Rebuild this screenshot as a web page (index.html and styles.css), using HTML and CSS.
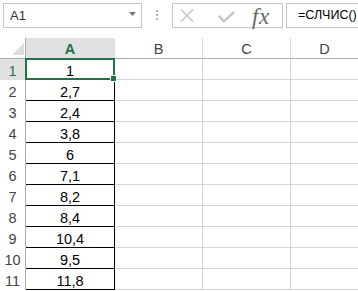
FILE: index.html
```html
<!DOCTYPE html>
<html lang="ru">
<head>
<meta charset="utf-8">
<title>Excel</title>
<link rel="stylesheet" href="styles.css">
</head>
<body>
<div class="app">
  <div class="fbar">
    <div class="namebox">
      <span class="nb-text">A1</span>
      <svg class="nb-arrow" width="7" height="4" viewBox="0 0 7 4"><polygon points="0,0 7,0 3.5,4" fill="#777"/></svg>
    </div>
    <div class="grip"><i></i><i></i><i></i></div>
    <div class="fxbox">
      <svg class="ic-x" width="14" height="13" viewBox="0 0 14 13"><path d="M1 0.5 L13 12.5 M13 0.5 L1 12.5" stroke="#c4c4c4" stroke-width="1.4" fill="none"/></svg>
      <svg class="ic-check" width="17" height="12" viewBox="0 0 17 12"><polyline points="0.8,4.8 6,10.3 16.3,0.8" stroke="#c4c4c4" stroke-width="2.3" fill="none"/></svg>
      <span class="fx">fx</span>
    </div>
    <div class="formula">=СЛЧИС()</div>
  </div>

  <div class="sheet">
    <div class="c corner"><svg width="12" height="12" viewBox="0 0 12 12"><polygon points="12,0 12,12 0,12" fill="#dcdcdc"/></svg></div>
    <div class="c colhdr sel">A</div>
    <div class="c colhdr">B</div>
    <div class="c colhdr">C</div>
    <div class="c colhdr last">D</div>

    <div class="c rowhdr sel">1</div>
    <div class="c val active">1</div>
    <div class="c g"></div><div class="c g"></div><div class="c g last"></div>

    <div class="c rowhdr">2</div><div class="c val">2,7</div>
    <div class="c g"></div><div class="c g"></div><div class="c g last"></div>

    <div class="c rowhdr">3</div><div class="c val">2,4</div>
    <div class="c g"></div><div class="c g"></div><div class="c g last"></div>

    <div class="c rowhdr">4</div><div class="c val">3,8</div>
    <div class="c g"></div><div class="c g"></div><div class="c g last"></div>

    <div class="c rowhdr">5</div><div class="c val">6</div>
    <div class="c g"></div><div class="c g"></div><div class="c g last"></div>

    <div class="c rowhdr">6</div><div class="c val">7,1</div>
    <div class="c g"></div><div class="c g"></div><div class="c g last"></div>

    <div class="c rowhdr">7</div><div class="c val">8,2</div>
    <div class="c g"></div><div class="c g"></div><div class="c g last"></div>

    <div class="c rowhdr">8</div><div class="c val">8,4</div>
    <div class="c g"></div><div class="c g"></div><div class="c g last"></div>

    <div class="c rowhdr">9</div><div class="c val">10,4</div>
    <div class="c g"></div><div class="c g"></div><div class="c g last"></div>

    <div class="c rowhdr">10</div><div class="c val">9,5</div>
    <div class="c g"></div><div class="c g"></div><div class="c g last"></div>

    <div class="c rowhdr">11</div><div class="c val">11,8</div>
    <div class="c g"></div><div class="c g"></div><div class="c g last"></div>
  </div>
</div>
</body>
</html>
```

FILE: styles.css
```css
* { box-sizing: border-box; }
html, body { margin: 0; padding: 0; background: #fff; }
body { width: 358px; height: 291px; overflow: hidden; font-family: "Liberation Sans", Arial, sans-serif; }

.fbar {
  height: 38px;
  padding-top: 3px;
  display: flex;
  align-items: flex-start;
  white-space: nowrap;
}
.namebox {
  margin-left: 3px;
  width: 139px;
  height: 25px;
  border: 1px solid #c6c6c6;
  display: flex;
  align-items: flex-start;
  justify-content: space-between;
  padding: 0 5px 0 6px;
}
.nb-text { font-size: 13px; line-height: 23px; color: #333; }
.nb-arrow { margin-top: 8px; display: block; }

.grip {
  width: 30px;
  padding-left: 14px;
  padding-top: 7px;
  display: flex;
  flex-direction: column;
  gap: 2px;
}
.grip i { display: block; width: 2px; height: 2px; background: #b0b0b0; }

.fxbox {
  width: 111px;
  height: 25px;
  border: 1px solid #c6c6c6;
  display: flex;
  align-items: flex-start;
}
.ic-x { display: block; margin-left: 7px; margin-top: 5px; }
.ic-check { display: block; margin-left: 24px; margin-top: 7px; }
.fx {
  margin-left: 17px;
  font-family: "Liberation Serif", "Times New Roman", serif;
  font-style: italic;
  font-size: 23px;
  line-height: 23px;
  margin-top: 1px;
  color: #666;
  letter-spacing: 0.5px;
}
.formula {
  margin-left: 3px;
  flex: 1;
  height: 25px;
  border: 1px solid #c6c6c6;
  border-right: none;
  padding-left: 11px;
  font-size: 12.5px;
  line-height: 23px;
  color: #000;
}

.sheet {
  display: grid;
  grid-template-columns: 26px 89px 88px 88px 1fr;
  grid-auto-rows: 21px;
}
.c {
  border-right: 1px solid #d4d4d4;
  border-bottom: 1px solid #d4d4d4;
  font-size: 14.5px;
  line-height: 16px;
  padding-top: 4px;
  text-align: center;
  color: #000;
}
.c.last { border-right: none; }

.corner {
  border-right: 1px solid #ababab;
  border-bottom: 1px solid #ababab;
  display: flex;
  justify-content: flex-end;
  align-items: flex-end;
  padding: 0 1px 3px 0;
}
.corner svg { display: block; }

.colhdr {
  border-right: 1px solid #dadada;
  border-bottom: 1px solid #ababab;
  color: #444;
  padding-top: 3px;
}
.colhdr.sel { background: #e1e1e1; color: #217346; font-weight: bold; }

.rowhdr {
  border-right: 1px solid #ababab;
  border-bottom: 1px solid transparent;
  color: #444;
}
.rowhdr.sel { background: #e1e1e1; color: #217346; }

.val {
  border-right: 1px solid #000;
  border-bottom: 1px solid #000;
}
.val.active { position: relative; }
.val.active::before {
  content: "";
  position: absolute;
  left: -1px; top: -1px; right: -1px; bottom: -1px;
  border: 2px solid #217346;
}
.val.active::after {
  content: "";
  position: absolute;
  right: -2px; bottom: -2px;
  width: 5px; height: 5px;
  background: #217346;
  box-shadow: 0 0 0 1px #fff;
}
```
